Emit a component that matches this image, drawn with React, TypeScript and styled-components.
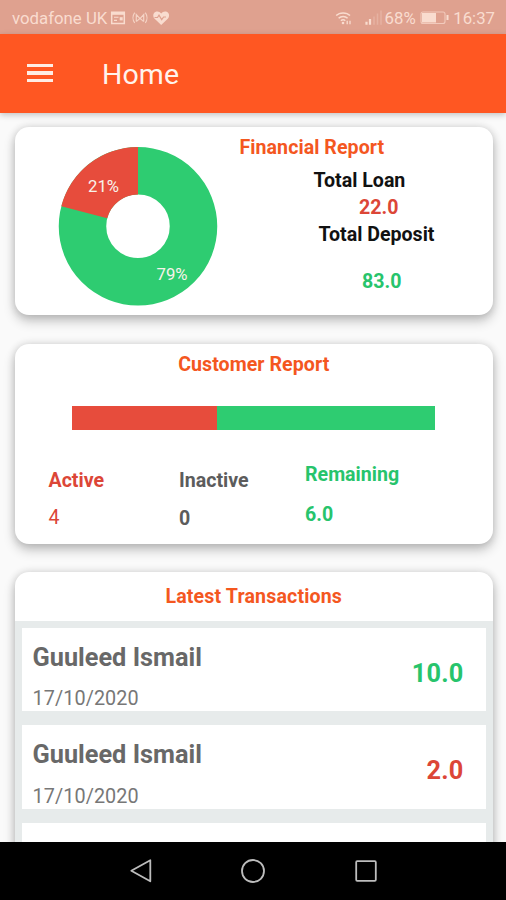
import React from 'react';
import styled, { createGlobalStyle } from 'styled-components';

const ORANGE = '#ff5722';
const TITLE = '#f4571f';
const RED = '#e74c3c';
const RED_TEXT = '#dc4637';
const GREEN = '#2ecc71';
const GREEN_TEXT = '#27c46c';

const GlobalStyle = createGlobalStyle`
  * { box-sizing: border-box; }
  body { margin: 0; background: #fafafa; font-family: Roboto, sans-serif; overflow: hidden; }
  svg { display: block; }
`;

const Screen = styled.div`
  display: flex;
  flex-direction: column;
  width: 506px;
  height: 900px;
  overflow: hidden;
  background: #fafafa;
`;

const StatusBar = styled.header`
  display: flex;
  align-items: center;
  flex: none;
  height: 34px;
  padding: 2px 11px 0 12px;
  background: #dfa18f;
  color: #f9dccf;
`;

const StatusText = styled.span`
  font-size: 16.8px;
  line-height: 20px;
  white-space: nowrap;
`;

const StatusIcons = styled.div`
  display: flex;
  flex: 1;
  margin-left: 3px;
`;

const StatusRight = styled.div`
  display: flex;
  align-items: center;
`;

const AppBar = styled.nav`
  display: flex;
  align-items: center;
  flex: none;
  height: 79px;
  padding: 3px 27px 0;
  background: ${ORANGE};
  box-shadow: 0 2px 6px rgba(0, 0, 0, 0.22);
  z-index: 1;
`;

const MenuButton = styled.button`
  display: flex;
  flex-direction: column;
  gap: 4px;
  width: 26px;
  margin: 0 49px 4px 0;
  padding: 0;
  border: 0;
  background: none;
`;

const MenuLine = styled.span`
  height: 3.5px;
  background: #ffede4;
`;

const PageTitle = styled.h1`
  margin: 0;
  font-size: 28.5px;
  font-weight: 400;
  line-height: 36px;
  letter-spacing: 0.1px;
  color: #fff3ec;
`;

const Content = styled.main`
  display: flex;
  flex-direction: column;
  gap: 28.2px;
  flex: 1;
  min-height: 0;
  padding: 13.6px 13px 0 14.5px;
  overflow: hidden;
`;

const Card = styled.section<{ $height: number }>`
  flex: none;
  height: ${(p) => p.$height}px;
  border-radius: 14px;
  background: #fff;
  box-shadow: 0 6px 12px rgba(0, 0, 0, 0.23), 0 0 9px rgba(0, 0, 0, 0.14);
`;

const FinancialCard = styled(Card)`
  display: flex;
`;

const ChartPane = styled.div`
  width: 225px;
  padding: 19px 0 0 42px;
`;

const ReportPane = styled.div`
  display: flex;
  flex-direction: column;
  align-items: flex-start;
  padding-top: 7px;
`;

const Label = styled.span<{ $color: string; $weight?: number; $indent?: number; $gap?: number }>`
  margin-top: ${(p) => p.$gap ?? 0}px;
  margin-left: ${(p) => p.$indent ?? 0}px;
  font-size: 19.6px;
  font-weight: ${(p) => p.$weight ?? 700};
  line-height: 27px;
  white-space: nowrap;
  color: ${(p) => p.$color};
`;

const CardTitle = styled.h2<{ $spacing?: number }>`
  margin: 0;
  font-size: 19.6px;
  font-weight: 700;
  line-height: 27px;
  letter-spacing: ${(p) => p.$spacing ?? 0.05}px;
  text-align: center;
  color: ${TITLE};
`;

const CustomerCard = styled(Card)`
  padding-top: 7px;
`;

const Bar = styled.div`
  display: flex;
  width: 363px;
  height: 24px;
  margin: 28.2px 0 0 57px;
`;

const Segment = styled.div<{ $grow: number; $color: string }>`
  flex: ${(p) => p.$grow};
  background: ${(p) => p.$color};
`;

const Stats = styled.div`
  display: grid;
  grid-template-columns: 130.5px 126px 1fr;
  align-items: start;
  padding: 31.3px 0 0 34px;
`;

const Stat = styled.div<{ $top: number; $gap: number }>`
  display: flex;
  flex-direction: column;
  gap: ${(p) => p.$gap}px;
  padding-top: ${(p) => p.$top}px;
`;

const TransactionsCard = styled(Card)`
  padding-top: 11.5px;
`;

const List = styled.div`
  display: flex;
  flex-direction: column;
  gap: 14px;
  margin-top: 10.3px;
  padding: 7px 7.5px 14px 7px;
  background: #e7ebeb;
`;

const Row = styled.article`
  display: flex;
  justify-content: space-between;
  align-items: center;
  height: 83.5px;
  padding: 0 22px 0 11px;
  background: #fff;
`;

const Person = styled.div`
  display: flex;
  flex-direction: column;
  padding-top: 15.5px;
`;

const Name = styled.span`
  font-size: 25.3px;
  font-weight: 700;
  line-height: 36px;
  color: #686868;
`;

const DateText = styled.span`
  margin-top: 8.8px;
  font-size: 19.8px;
  line-height: 30px;
  letter-spacing: 0.1px;
  color: #777;
`;

const Amount = styled.span<{ $color: string }>`
  padding-top: 8px;
  font-size: 25.3px;
  font-weight: 700;
  letter-spacing: 0.2px;
  color: ${(p) => p.$color};
`;

const NavBar = styled.footer`
  display: flex;
  justify-content: center;
  align-items: center;
  gap: 86.5px;
  flex: none;
  height: 58px;
  background: #000;
  z-index: 1;
`;

function DonutChart() {
  return (
    <svg width="162" height="162" viewBox="0 0 162 162" fontFamily="Roboto, sans-serif" fontSize="17" fill="#f7f3ea">
      <circle cx="81" cy="80.3" r="55.5" fill="none" stroke={GREEN} strokeWidth="47.5" />
      <path d="M81 1 A79.3 79.3 0 0 0 4.3 60.3 L50.2 72.3 A31.8 31.8 0 0 1 81 48.5 Z" fill={RED} />
      <text x="31" y="46" textLength="31" lengthAdjust="spacingAndGlyphs">21%</text>
      <text x="99.5" y="134" textLength="31" lengthAdjust="spacingAndGlyphs">79%</text>
    </svg>
  );
}

function NotificationIcons() {
  return (
    <svg width="62" height="20" viewBox="0 0 62 20" fill="none" stroke="#f9dccf" strokeWidth="1.5">
      <path d="M1.7 4.2h12.6v11.4H1.7z" />
      <path d="M1.7 5.6h12.6" strokeWidth="2.4" />
      <path d="M4 9.3h4.5M4 12.4h3" strokeWidth="1.1" />
      <path d="M9.7 9.2h3v3.2h-3z" fill="#f9dccf" stroke="none" />
      <g strokeWidth="1.2" opacity=".85">
        <path d="M24.700 4.600c-2.200 3-2.200 7.400 0 10.400M35.300 4.600c2.200 3 2.200 7.400 0 10.400" />
        <path d="M26.300 13.600V6.600l3.700 4 3.700-4v7M26.300 13.600l3.700-3.400 3.700 3.400" />
      </g>
      <path d="M51.200 17 44.400 10.500C42.600 8.400 43 5.200 45.300 4c2.100-1 4.500-.4 5.900 1.600C52.600 3.600 55 3 57.100 4c2.300 1.200 2.700 4.400.9 6.500z" fill="#f9dccf" stroke="none" />
      <path d="M44.500 9.500h3l1.500-2.300 2.700 4.500L53.600 9h2.400" stroke="#dfa18f" strokeWidth="1.2" />
    </svg>
  );
}

function WifiIcon() {
  return (
    <svg width="52" height="20" viewBox="0 0 52 20" fill="none" stroke="#f9dccf" strokeWidth="1.5">
      <path d="M3.200 7.600c3.500-3.600 10.300-3.600 13.800 0M5.600 10.300c2.400-2.400 6.600-2.400 9 0M7.900 12.800c1.200-1.100 3.200-1.100 4.400 0" />
      <circle cx="10" cy="15" r="1.3" fill="#f9dccf" stroke="none" />
      <path d="M14.200 12.700v3.600M17 12.700v3.600" strokeWidth="1.3" />
      <path d="M33.500 13.700v3M37 11v5.700" strokeWidth="2.2" />
      <path d="M41 8.500v8.200M44.500 5.500v11.200M48 2.500v14.200" opacity=".3" />
    </svg>
  );
}

function BatteryIcon() {
  return (
    <svg width="37.5" height="20" viewBox="0 0 37.500 20" fill="none" stroke="#f9dccf">
      <rect x="5" y="4" width="24" height="11.500" rx="2" strokeWidth="1.1" opacity=".7" />
      <path d="M6 5h14v9.500H6z" fill="#f9dccf" stroke="none" />
      <path d="M31.500 7v5" strokeWidth="2" />
    </svg>
  );
}

const transactions = [
  { name: 'Guuleed Ismail', date: '17/10/2020', amount: '10.0', color: GREEN_TEXT },
  { name: 'Guuleed Ismail', date: '17/10/2020', amount: '2.0', color: RED_TEXT },
];

export default function App() {
  return (
    <Screen>
      <GlobalStyle />
      <StatusBar>
        <StatusText>vodafone UK</StatusText>
        <StatusIcons><NotificationIcons /></StatusIcons>
        <StatusRight>
          <WifiIcon />
          <StatusText>68%</StatusText>
          <BatteryIcon />
          <StatusText>16:37</StatusText>
        </StatusRight>
      </StatusBar>
      <AppBar>
        <MenuButton aria-label="Menu"><MenuLine /><MenuLine /><MenuLine /></MenuButton>
        <PageTitle>Home</PageTitle>
      </AppBar>
      <Content>
        <FinancialCard $height={188.8}>
          <ChartPane><DonutChart /></ChartPane>
          <ReportPane>
            <CardTitle>Financial Report</CardTitle>
            <Label $color="#111" $indent={74} $gap={6}>Total Loan</Label>
            <Label $color={RED_TEXT} $indent={119.500}>22.0</Label>
            <Label $color="#111" $indent={79}>Total Deposit</Label>
            <Label $color={GREEN_TEXT} $indent={122.500} $gap={20}>83.0</Label>
          </ReportPane>
        </FinancialCard>
        <CustomerCard $height={200}>
          <CardTitle>Customer Report</CardTitle>
          <Bar>
            <Segment $grow={4} $color={RED} />
            <Segment $grow={6} $color={GREEN} />
          </Bar>
          <Stats>
            <Stat $top={5.5} $gap={10}>
              <Label $color={RED_TEXT}>Active</Label>
              <Label $color={RED_TEXT} $weight={400}>4</Label>
            </Stat>
            <Stat $top={5.5} $gap={11}>
              <Label $color="#5c5c5c">Inactive</Label>
              <Label $color="#5c5c5c">0</Label>
            </Stat>
            <Stat $top={0} $gap={13}>
              <Label $color={GREEN_TEXT}>Remaining</Label>
              <Label $color={GREEN_TEXT}>6.0</Label>
            </Stat>
          </Stats>
        </CustomerCard>
        <TransactionsCard $height={420}>
          <CardTitle $spacing={0.15}>Latest Transactions</CardTitle>
          <List>
            {transactions.map((t) => (
              <Row key={t.amount}>
                <Person><Name>{t.name}</Name><DateText>{t.date}</DateText></Person>
                <Amount $color={t.color}>{t.amount}</Amount>
              </Row>
            ))}
            <Row />
          </List>
        </TransactionsCard>
      </Content>
      <NavBar>
        <svg width="26" height="26" viewBox="0 0 26 26" fill="none" stroke="#bdbdbd" strokeWidth="1.8" strokeLinejoin="round"><path d="M22.300 2.300v21L3.300 12.800z" /></svg>
        <svg width="26" height="26" viewBox="0 0 26 26" fill="none" stroke="#bdbdbd" strokeWidth="1.8"><circle cx="13" cy="13" r="11" /></svg>
        <svg width="26" height="26" viewBox="0 0 26 26" fill="none" stroke="#bdbdbd" strokeWidth="1.8"><rect x="3.2" y="3.2" width="19.6" height="19.6" rx="1" /></svg>
      </NavBar>
    </Screen>
  );
}
